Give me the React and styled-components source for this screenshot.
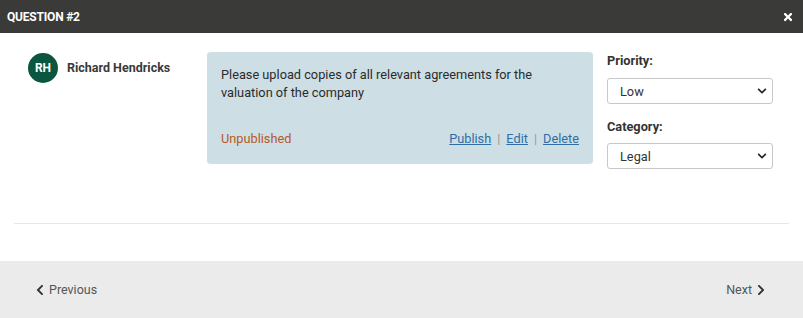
import React from 'react'
import styled, { createGlobalStyle } from 'styled-components'
import { FaTimes, FaChevronLeft, FaChevronRight, FaChevronDown } from 'react-icons/fa'

const GlobalStyle = createGlobalStyle`
    body {
        margin: 0;
        background: #fff;
        font-family: Roboto, "Liberation Sans", Arial, sans-serif;
        color: #333;
    }
`

const Modal = styled.div`
    width: 803px;
    height: 318px;
    display: flex;
    flex-direction: column;
    background: #fff;
`

const Header = styled.div`
    height: 33px;
    flex-shrink: 0;
    background: #3a3b38;
    display: flex;
    align-items: center;
    justify-content: space-between;
    padding: 0 9px 0 7px;
    color: #fff;
`

const Title = styled.h1`
    margin: 0;
    font-size: 12px;
    font-weight: 700;
    letter-spacing: -0.2px;
`

const Close = styled.button`
    border: 0;
    background: none;
    color: #fff;
    padding: 0;
    display: flex;
    font-size: 12px;
    cursor: pointer;
`

const Body = styled.div`
    padding: 19px 14px 0;
`

const Row = styled.div`
    display: flex;
    padding: 0 16px 0 14px;
    height: 171px;
`

const Author = styled.div`
    width: 179px;
    display: flex;
    align-items: flex-start;
    gap: 9px;
    padding-top: 1px;
`

const Avatar = styled.div`
    width: 30px;
    height: 30px;
    border-radius: 50%;
    background: #0b5640;
    color: #fff;
    font-size: 12px;
    font-weight: 700;
    display: flex;
    align-items: center;
    justify-content: center;
    flex-shrink: 0;
`

const Name = styled.div`
    font-size: 12.5px;
    font-weight: 700;
    line-height: 30px;
    color: #3a3a3a;
`

const QuestionBox = styled.div`
    width: 386px;
    height: 112px;
    box-sizing: border-box;
    background: #cddee5;
    border-radius: 4px;
    padding: 14px 14px 16px;
    display: flex;
    flex-direction: column;
    justify-content: space-between;
    font-size: 12.75px;
    line-height: 18px;
`

const QuestionText = styled.p`
    margin: 0;
    color: #2b2b2b;
`

const BoxFooter = styled.div`
    display: flex;
    justify-content: space-between;
    align-items: center;
`

const Status = styled.span`
    color: #b65a26;
`

const Actions = styled.div`
    display: flex;
    gap: 6px;
    color: #999;
`

const ActionLink = styled.a`
    color: #2f6ea5;
    text-decoration: underline;
    cursor: pointer;
`

const Side = styled.div`
    margin-left: 14px;
    width: 166px;
    display: flex;
    flex-direction: column;
`

const FieldLabel = styled.label`
    font-size: 12.75px;
    font-weight: 700;
    line-height: 18px;
    color: #333;
    margin-top: ${p => p.$top || 0}px;
    margin-bottom: ${p => p.$bottom || 8}px;
`

const SelectWrap = styled.div`
    position: relative;
    height: 26px;
`

const Select = styled.select`
    appearance: none;
    width: 100%;
    height: 100%;
    box-sizing: border-box;
    border: 1px solid #c8c8c8;
    border-radius: 3px;
    background: #fff;
    padding: 0 12px;
    font-family: inherit;
    font-size: 12.75px;
    color: #333;
`

const Chevron = styled.span`
    position: absolute;
    right: 6px;
    top: 50%;
    transform: translateY(-50%);
    display: flex;
    font-size: 10px;
    color: #222;
    pointer-events: none;
`

const Divider = styled.hr`
    margin: 0;
    border: 0;
    border-top: 1px solid #e6e6e6;
`

const Spacer = styled.div`
    height: 37px;
`

const Footer = styled.div`
    flex: 1;
    background: #ebebeb;
    display: flex;
    align-items: center;
    justify-content: space-between;
    padding: 0 36px 0 34px;
`

const NavButton = styled.button`
    border: 0;
    background: none;
    padding: 0;
    display: flex;
    align-items: center;
    gap: 3px;
    font-family: inherit;
    font-size: 12.5px;
    color: #555;
    cursor: pointer;

    svg {
        font-size: 12px;
        color: #333;
    }
`

function Dropdown({ value, options }) {
    return (
        <SelectWrap>
            <Select defaultValue={value}>
                {options.map(o => <option key={o}>{o}</option>)}
            </Select>
            <Chevron><FaChevronDown /></Chevron>
        </SelectWrap>
    )
}

export default function App() {
    return (
        <Modal>
            <GlobalStyle />
            <Header>
                <Title>QUESTION #2</Title>
                <Close><FaTimes /></Close>
            </Header>
            <Body>
                <Row>
                    <Author>
                        <Avatar>RH</Avatar>
                        <Name>Richard Hendricks</Name>
                    </Author>
                    <QuestionBox>
                        <QuestionText>
                            Please upload copies of all relevant agreements for the valuation of the company
                        </QuestionText>
                        <BoxFooter>
                            <Status>Unpublished</Status>
                            <Actions>
                                <ActionLink>Publish</ActionLink>|
                                <ActionLink>Edit</ActionLink>|
                                <ActionLink>Delete</ActionLink>
                            </Actions>
                        </BoxFooter>
                    </QuestionBox>
                    <Side>
                        <FieldLabel>Priority:</FieldLabel>
                        <Dropdown value="Low" options={['Low', 'Medium', 'High']} />
                        <FieldLabel $top={14} $bottom={7}>Category:</FieldLabel>
                        <Dropdown value="Legal" options={['Legal', 'Finance', 'Tax']} />
                    </Side>
                </Row>
                <Divider />
            </Body>
            <Spacer />
            <Footer>
                <NavButton><FaChevronLeft /> Previous</NavButton>
                <NavButton>Next <FaChevronRight /></NavButton>
            </Footer>
        </Modal>
    )
}
